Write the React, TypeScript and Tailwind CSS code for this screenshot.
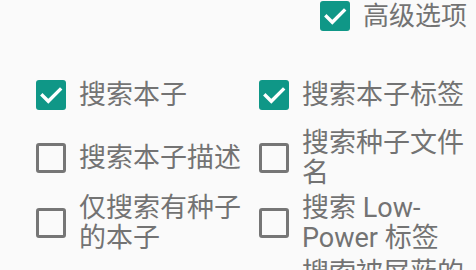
import React from "react";

const font = { fontFamily: "Roboto, 'Noto Sans CJK SC', sans-serif" };

function Box({ checked }: { checked: boolean }) {
  if (checked) {
    return (
      <svg width="30" height="30" viewBox="0 0 30 30" className="shrink-0">
        <rect x="0" y="0" width="30" height="30" rx="3" fill="#0f9787" />
        <path d="M6.5 15.5 L12.3 21.3 L24 9.6" fill="none" stroke="#ffffff" strokeWidth="3.4" strokeLinecap="square" />
      </svg>
    );
  }
  return <div className="w-[30px] h-[30px] shrink-0 border-[3px] border-[#767676] rounded-[3px]" />;
}

function Item({ label, checked }: { label: string; checked: boolean }) {
  return (
    <div className="flex items-center min-h-[57px]">
      <Box checked={checked} />
      <span className="ml-[13px] text-[27px] leading-[30px] text-[#737373] w-[165px]">{label}</span>
    </div>
  );
}

export default function App() {
  return (
    <div className="w-[476px] h-[270px] overflow-hidden bg-[#fafafa]" style={font}>
      <div className="flex justify-end items-center h-[31px] pr-[9px]">
        <Box checked={true} />
        <span className="ml-[13px] text-[26px] leading-[30px] text-[#737373]">高级选项</span>
      </div>
      <div className="mt-[35px] grid grid-cols-[223px_1fr] pl-[36px] gap-y-[5px]">
        <Item label="搜索本子" checked={true} />
        <Item label="搜索本子标签" checked={true} />
        <Item label="搜索本子描述" checked={false} />
        <Item label="搜索种子文件名" checked={false} />
        <Item label="仅搜索有种子的本子" checked={false} />
        <Item label="搜索 Low-Power 标签" checked={false} />
        <Item label="最低评分" checked={false} />
        <Item label="搜索被屏蔽的标签" checked={false} />
      </div>
    </div>
  );
}
